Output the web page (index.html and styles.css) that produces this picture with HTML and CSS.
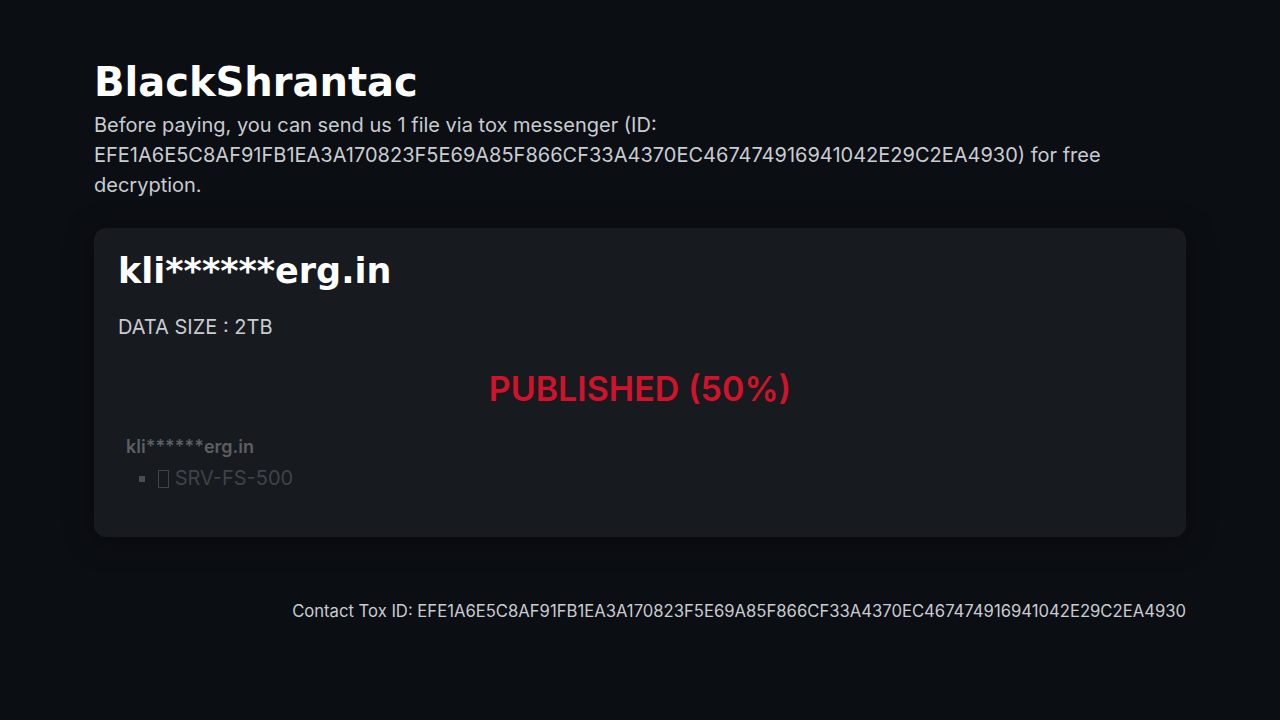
FILE: index.html
```html
<!DOCTYPE html>
<html lang="en">
<head>
<meta charset="utf-8">
<title>BlackShrantac</title>
<link rel="stylesheet" href="styles.css">
</head>
<body>
<main class="page">
  <header class="intro">
    <h1 class="brand">BlackShrantac</h1>
    <p class="lead">Before paying, you can send us 1 file via tox messenger (ID: EFE1A6E5C8AF91FB1EA3A170823F5E69A85F866CF33A4370EC467474916941042E29C2EA4930) for free decryption.</p>
  </header>
  <section class="card">
    <h2 class="card-title">kli******erg.in</h2>
    <p class="size">DATA SIZE : 2TB</p>
    <p class="status">PUBLISHED (50%)</p>
    <div class="tree">
      <div class="tree-root">kli******erg.in</div>
      <ul class="tree-list">
        <li><span class="glyph"></span> SRV-FS-500</li>
      </ul>
    </div>
  </section>
  <footer class="footer">Contact Tox ID: EFE1A6E5C8AF91FB1EA3A170823F5E69A85F866CF33A4370EC467474916941042E29C2EA4930</footer>
</main>
</body>
</html>
```
FILE: styles.css
```css
html, body {
  margin: 0;
  padding: 0;
  background: #0b0e13;
}
body {
  font-family: Inter, "Noto Sans", sans-serif;
  color: #c9ccd1;
}
.page {
  max-width: 1092px;
  margin: 0 auto;
  padding: 58px 0 40px;
}
.brand {
  font-family: "DejaVu Sans", sans-serif;
  font-weight: 700;
  font-size: 40px;
  line-height: 48px;
  color: #ffffff;
  margin: 0;
}
.lead {
  margin: 4px 0 0;
  font-size: 20px;
  line-height: 30px;
  color: #c9ccd1;
}
.card {
  margin-top: 28px;
  background: #171a1f;
  border-radius: 12px;
  padding: 22px 24px 45px;
  box-shadow: 0 4px 30px rgba(0,0,0,0.35);
}
.card-title {
  font-family: "DejaVu Sans", sans-serif;
  font-weight: 700;
  font-size: 35px;
  line-height: 42px;
  color: #ffffff;
  margin: 0;
}
.size {
  margin: 20px 0 0;
  font-size: 20px;
  line-height: 30px;
  color: #c9ccd1;
}
.status {
  margin: 27px 0 0;
  text-align: center;
  font-size: 34px;
  line-height: 40px;
  font-weight: 600;
  color: #d0132a;
}
.tree {
  margin-top: 25px;
  padding-left: 8px;
}
.tree-root {
  font-size: 18px;
  font-weight: 600;
  line-height: 26px;
  color: #5c5f64;
}
.tree-list {
  margin: 4px 0 0;
  padding-left: 32px;
  list-style: square;
  color: #3f434a;
  font-size: 20px;
  line-height: 28px;
}
.tree-list li::marker {
  color: #4a4d53;
}
.glyph {
  display: inline-block;
  width: 11px;
  height: 18px;
  border: 1px solid #3f434a;
  vertical-align: -3px;
  box-sizing: border-box;
}
.footer {
  margin-top: 62px;
  text-align: right;
  font-size: 16.65px;
  line-height: 24px;
  color: #c9ccd1;
}
```
